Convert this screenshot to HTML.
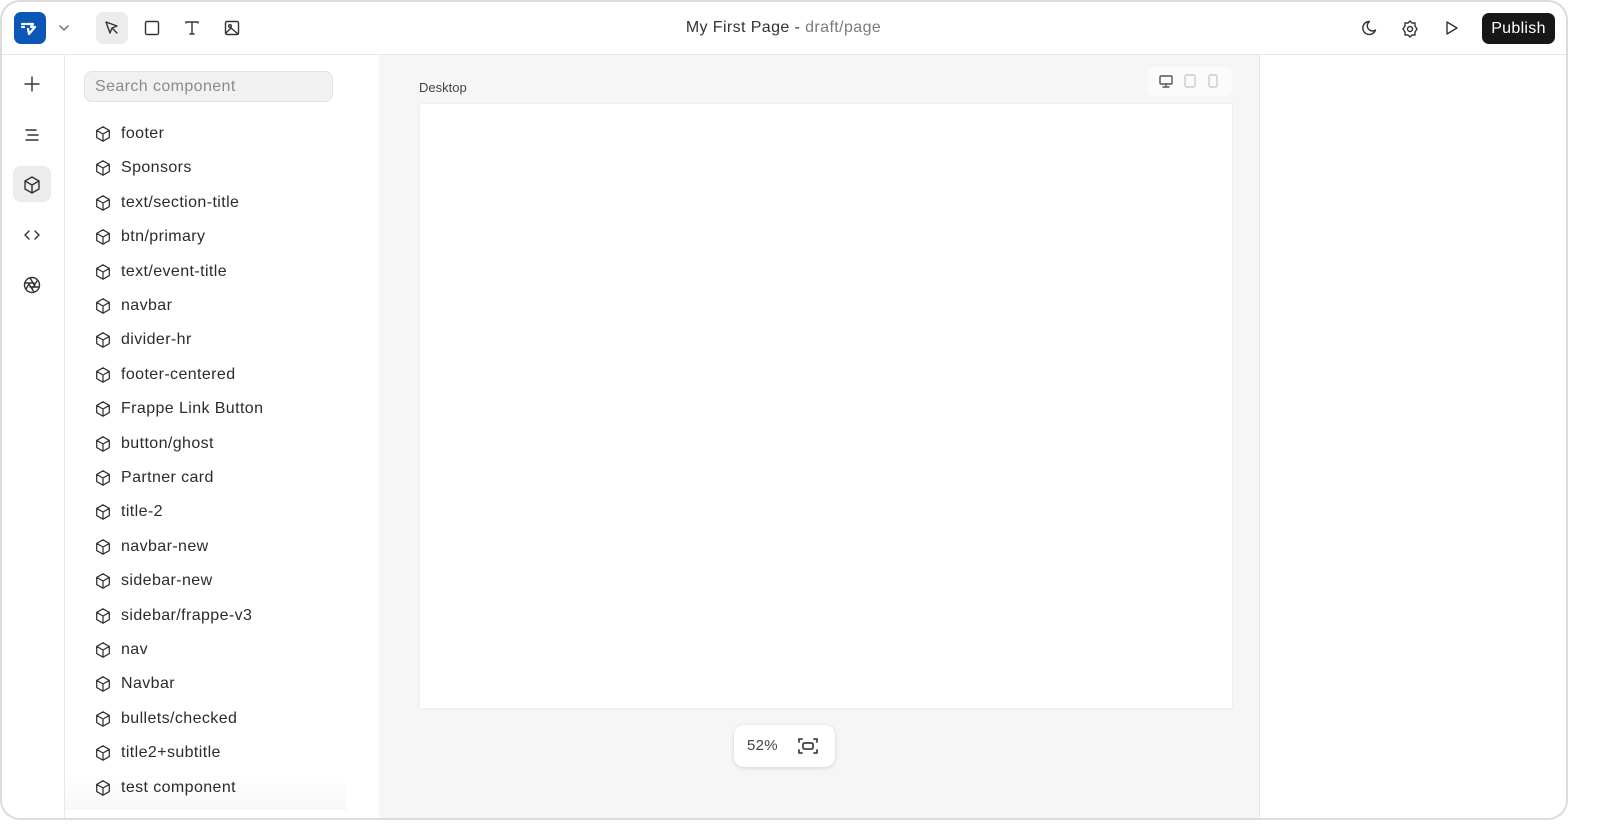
<!DOCTYPE html>
<html><head><meta charset="utf-8"><style>
*{box-sizing:border-box;margin:0;padding:0}
body{width:1600px;height:837px;background:#fff;font-family:"Liberation Sans",sans-serif;color:#333;position:relative;overflow:hidden}
.win{position:absolute;left:0;top:0;width:1568px;height:820px;border:2px solid #dcdcdc;border-radius:20px;overflow:hidden;background:#fff}
.top{position:absolute;left:0;top:0;right:0;height:53px;border-bottom:1px solid #e8e8e8}
.rail{position:absolute;left:0;top:53px;width:63px;bottom:0;border-right:1px solid #e8e8e8}
.panel{position:absolute;left:63px;top:53px;width:315px;bottom:0;border-right:1px solid #e8e8e8}
.canvas{position:absolute;left:377px;top:53px;width:881px;bottom:0;background:#f6f6f6;border-right:1px solid #e8e8e8}
svg{position:absolute;fill:none;stroke:#333;stroke-width:1.4;stroke-linecap:round;stroke-linejoin:round}
.item{position:absolute;left:29px;font-size:16px;color:#2b2b2b;height:20px;line-height:20px;letter-spacing:0.4px;z-index:2}
.item svg{left:0;top:1px}
.item span{position:absolute;left:27px;white-space:nowrap}
</style></head><body>
<div class="win">
<div class="top">
 <div style="position:absolute;left:12px;top:10px;width:32px;height:32px;background:#0b57b8;border-radius:7px"></div>
 <svg style="left:16px;top:14px" width="24" height="24" viewBox="0 0 24 24"><path d="M4 8h3M9 8h6l-2 3h4l-6 7-1-5" stroke="#fff" stroke-width="2.2"/><path d="M4 11h2" stroke="#fff" stroke-width="2.2"/></svg>
 <svg style="left:56px;top:20px" width="12" height="12" viewBox="0 0 12 12"><path d="M2 4l4 4 4-4" stroke="#666"/></svg>
 <div style="position:absolute;left:94px;top:10px;width:32px;height:32px;background:#ececec;border-radius:7px"></div>
 <svg style="left:101px;top:17px" width="18" height="18" viewBox="0 0 18 18"><path d="M3 3l11 4-5 2-2 5zM9 9l5 5"/></svg>
 <svg style="left:141px;top:17px" width="18" height="18" viewBox="0 0 18 18"><rect x="2.5" y="2.5" width="13" height="13" rx="1.5"/></svg>
 <svg style="left:181px;top:17px" width="18" height="18" viewBox="0 0 18 18"><path d="M3 4V3h12v1M9 3v12M7 15h4"/></svg>
 <svg style="left:221px;top:17px" width="18" height="18" viewBox="0 0 18 18"><rect x="2.5" y="2.5" width="13" height="13" rx="1.5"/><circle cx="7" cy="7" r="1.3"/><path d="M3 14l5-5 7 6"/></svg>
 <div style="position:absolute;left:0;right:0;top:17px;text-align:center;font-size:16px;color:#333;padding-right:1px;letter-spacing:0.4px">My First Page - <span style="color:#7c7c7c">draft/page</span></div>
 <svg style="left:1358px;top:17px" width="18" height="18" viewBox="0 0 18 18"><path d="M9.5 2.5a6.5 6.5 0 1 0 6 8.5 5 5 0 0 1-6-8.5z"/></svg>
 <svg style="left:1398px;top:17px" width="20" height="20" viewBox="0 0 20 20"><path d="M10 2l2 2h3v3l2 3-2 3v3h-3l-2 2-2-2H5v-3l-2-3 2-3V4h3z"/><circle cx="10" cy="10" r="2.5"/></svg>
 <svg style="left:1441px;top:17px" width="18" height="18" viewBox="0 0 18 18"><path d="M4 3l10 6-10 6z"/></svg>
 <div style="position:absolute;left:1480px;top:11px;width:73px;height:31px;background:#171717;border-radius:7px;color:#fff;font-size:16px;line-height:31px;text-align:center;letter-spacing:0.3px">Publish</div>
</div>
<div class="rail">
 <svg style="left:21px;top:20px" width="18" height="18" viewBox="0 0 18 18"><path d="M9 2v14M2 9h14"/></svg>
 <svg style="left:21px;top:71px" width="18" height="18" viewBox="0 0 18 18"><path d="M3 4h10M5 9h10M3 14h12"/></svg>
 <div style="position:absolute;left:11px;top:111px;width:38px;height:36px;background:#ececec;border-radius:8px"></div>
 <svg style="left:20px;top:120px" width="20" height="20" viewBox="0 0 20 20"><path d="M10 2l7 4v8l-7 4-7-4V6zM3 6l7 4 7-4M10 10v8"/></svg>
 <svg style="left:21px;top:171px" width="18" height="18" viewBox="0 0 18 18"><path d="M6 5L2 9l4 4M12 5l4 4-4 4"/></svg>
 <svg style="left:20px;top:220px" width="20" height="20" viewBox="0 0 20 20"><circle cx="10" cy="10" r="7.5"/><path d="M8 3l5 8M15 6l-5 8M17 12H8M12 17L7 9M4 14l3-5M3 8h9"/></svg>
</div>
<div class="panel">
 <div style="position:absolute;left:19px;top:16px;width:249px;height:31px;background:#f1f1f1;border:1px solid #e3e3e3;border-radius:8px;font-size:16px;color:#8a8a8a;line-height:29px;padding-left:10px;letter-spacing:0.4px">Search component</div>
 <div style="position:absolute;left:0;top:720px;width:281px;height:35px;background:linear-gradient(#fff0,#f7f7f7);z-index:1"></div>
 <div id="list"></div>
</div>
<div class="canvas">
 <div style="position:absolute;left:40px;top:25px;font-size:13px;color:#444">Desktop</div>
 <div style="position:absolute;left:769px;top:12px;width:84px;height:29px;background:#fbfbfb;border-radius:6px"></div>
 <svg style="left:780px;top:20px" width="14" height="13" viewBox="0 0 14 13"><rect x="1" y="1" width="12" height="8" rx="1" stroke="#555"/><path d="M7 9v3M4 12h6" stroke="#555"/></svg>
 <svg style="left:805px;top:19px" width="12" height="14" viewBox="0 0 12 14"><rect x="1" y="1" width="10" height="12" rx="1.5" stroke="#ccc"/></svg>
 <svg style="left:829px;top:19px" width="10" height="14" viewBox="0 0 10 14"><rect x="1" y="1" width="8" height="12" rx="1.5" stroke="#ccc"/></svg>
 <div style="position:absolute;left:41px;top:49px;width:812px;height:604px;background:#fff;box-shadow:0 0 3px rgba(0,0,0,.08)"></div>
 <div style="position:absolute;left:355px;top:670px;width:101px;height:42px;background:#fff;border-radius:10px;box-shadow:0 1px 4px rgba(0,0,0,.15)">
  <div style="position:absolute;left:13px;top:12px;font-size:15px;color:#444;letter-spacing:0.3px">52%</div>
  <svg style="left:63px;top:11px" width="22" height="20" viewBox="0 0 22 20"><path d="M2 6V3h3M17 3h3v3M20 14v3h-3M5 17H2v-3" stroke="#444" stroke-width="1.8"/><rect x="6" y="7" width="10" height="6" rx="1.5" stroke="#444" stroke-width="1.8"/></svg>
 </div>
</div>
</div>
<script>
var n=["footer","Sponsors","text/section-title","btn/primary","text/event-title","navbar","divider-hr","footer-centered","Frappe Link Button","button/ghost","Partner card","title-2","navbar-new","sidebar-new","sidebar/frappe-v3","nav","Navbar","bullets/checked","title2+subtitle","test component"];
var h="";n.forEach(function(t,i){var y=69+i*34.4;h+='<div class="item" style="top:'+y+'px"><svg width="18" height="18" viewBox="0 0 20 20"><path d="M10 2l7 4v8l-7 4-7-4V6zM3 6l7 4 7-4M10 10v8"/></svg><span>'+t.replace(/&/g,"&amp;")+'</span></div>'});
document.getElementById("list").innerHTML=h;
</script>
</body></html>
